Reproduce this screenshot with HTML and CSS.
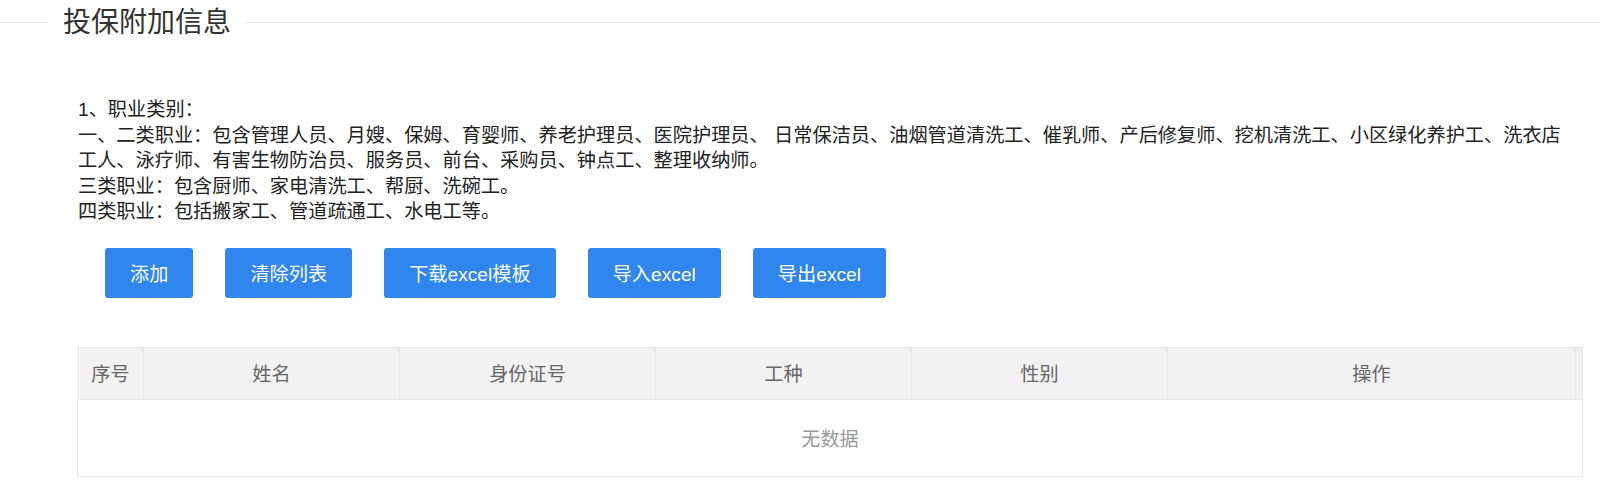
FILE: index.html
```html
<!DOCTYPE html>
<html lang="zh-CN">
  <head>
    <meta charset="UTF-8" />
    <meta name="viewport" content="width=device-width, initial-scale=1.0" />
    <title>投保附加信息</title>
    <link rel="stylesheet" href="styles.css">
  </head>
  <body>
    <div class="field-title">
      <span class="legend">投保附加信息</span>
    </div>
    <div class="content">
      <div class="tips">
        <p>1、职业类别：</p>
        <p>一、二类职业：包含管理人员、月嫂、保姆、育婴师、养老护理员、医院护理员、 日常保洁员、油烟管道清洗工、催乳师、产后修复师、挖机清洗工、小区绿化养护工、洗衣店工人、泳疗师、有害生物防治员、服务员、前台、采购员、钟点工、整理收纳师。</p>
        <p>三类职业：包含厨师、家电清洗工、帮厨、洗碗工。</p>
        <p>四类职业：包括搬家工、管道疏通工、水电工等。</p>
      </div>
      <div class="toolbar">
        <button class="btn">添加</button>
        <button class="btn">清除列表</button>
        <button class="btn">下载excel模板</button>
        <button class="btn">导入excel</button>
        <button class="btn">导出excel</button>
      </div>
      <table class="data-table">
        <thead>
          <tr>
            <th class="col-no">序号</th>
            <th class="col-mid">姓名</th>
            <th class="col-mid">身份证号</th>
            <th class="col-mid">工种</th>
            <th class="col-mid">性别</th>
            <th>操作</th>
            <th class="col-gutter"></th>
          </tr>
        </thead>
        <tbody>
          <tr>
            <td class="empty" colspan="7">无数据</td>
          </tr>
        </tbody>
      </table>
    </div>
  </body>
</html>
```

FILE: styles.css
```css
* {
  box-sizing: border-box;
}
body {
  margin: 0;
  background-color: #fff;
  color: #333;
  font-family: "Liberation Sans", "Noto Sans CJK SC", sans-serif;
}
.field-title {
  display: flex;
  align-items: center;
  height: 45px;
}
.field-title::before,
.field-title::after {
  content: "";
  border-top: 1px solid #e6e6e6;
}
.field-title::before {
  width: 49px;
}
.field-title::after {
  flex: 1;
}
.legend {
  padding: 0 14px;
  font-size: 28px;
  line-height: 1;
  color: #333;
}
.content {
  padding: 0 17px 0 77px;
}
.tips {
  margin-top: 52px;
  padding-left: 1px;
  padding-right: 10px;
  font-size: 19.2px;
  line-height: 25.5px;
  color: #222;
}
.tips p {
  margin: 0;
}
.toolbar {
  display: flex;
  gap: 32px;
  margin-top: 23px;
  padding-left: 28px;
}
.btn {
  height: 50px;
  padding: 0 25px;
  border: none;
  border-radius: 3px;
  background-color: #2e86ee;
  color: #fff;
  font-family: inherit;
  font-size: 19.2px;
  cursor: pointer;
}
.btn:hover {
  opacity: 0.85;
}
.data-table {
  width: 100%;
  margin-top: 49px;
  border-collapse: collapse;
  table-layout: fixed;
  font-size: 19.2px;
}
.data-table th,
.data-table td {
  border: 1px solid #e6e6e6;
  text-align: center;
}
.data-table th {
  height: 52px;
  background-color: #f2f2f2;
  color: #666;
  font-weight: normal;
}
.col-no {
  width: 66px;
}
.col-mid {
  width: 256px;
}
.col-gutter {
  width: 7px;
}
.data-table .empty {
  height: 77px;
  color: #999;
}
```
